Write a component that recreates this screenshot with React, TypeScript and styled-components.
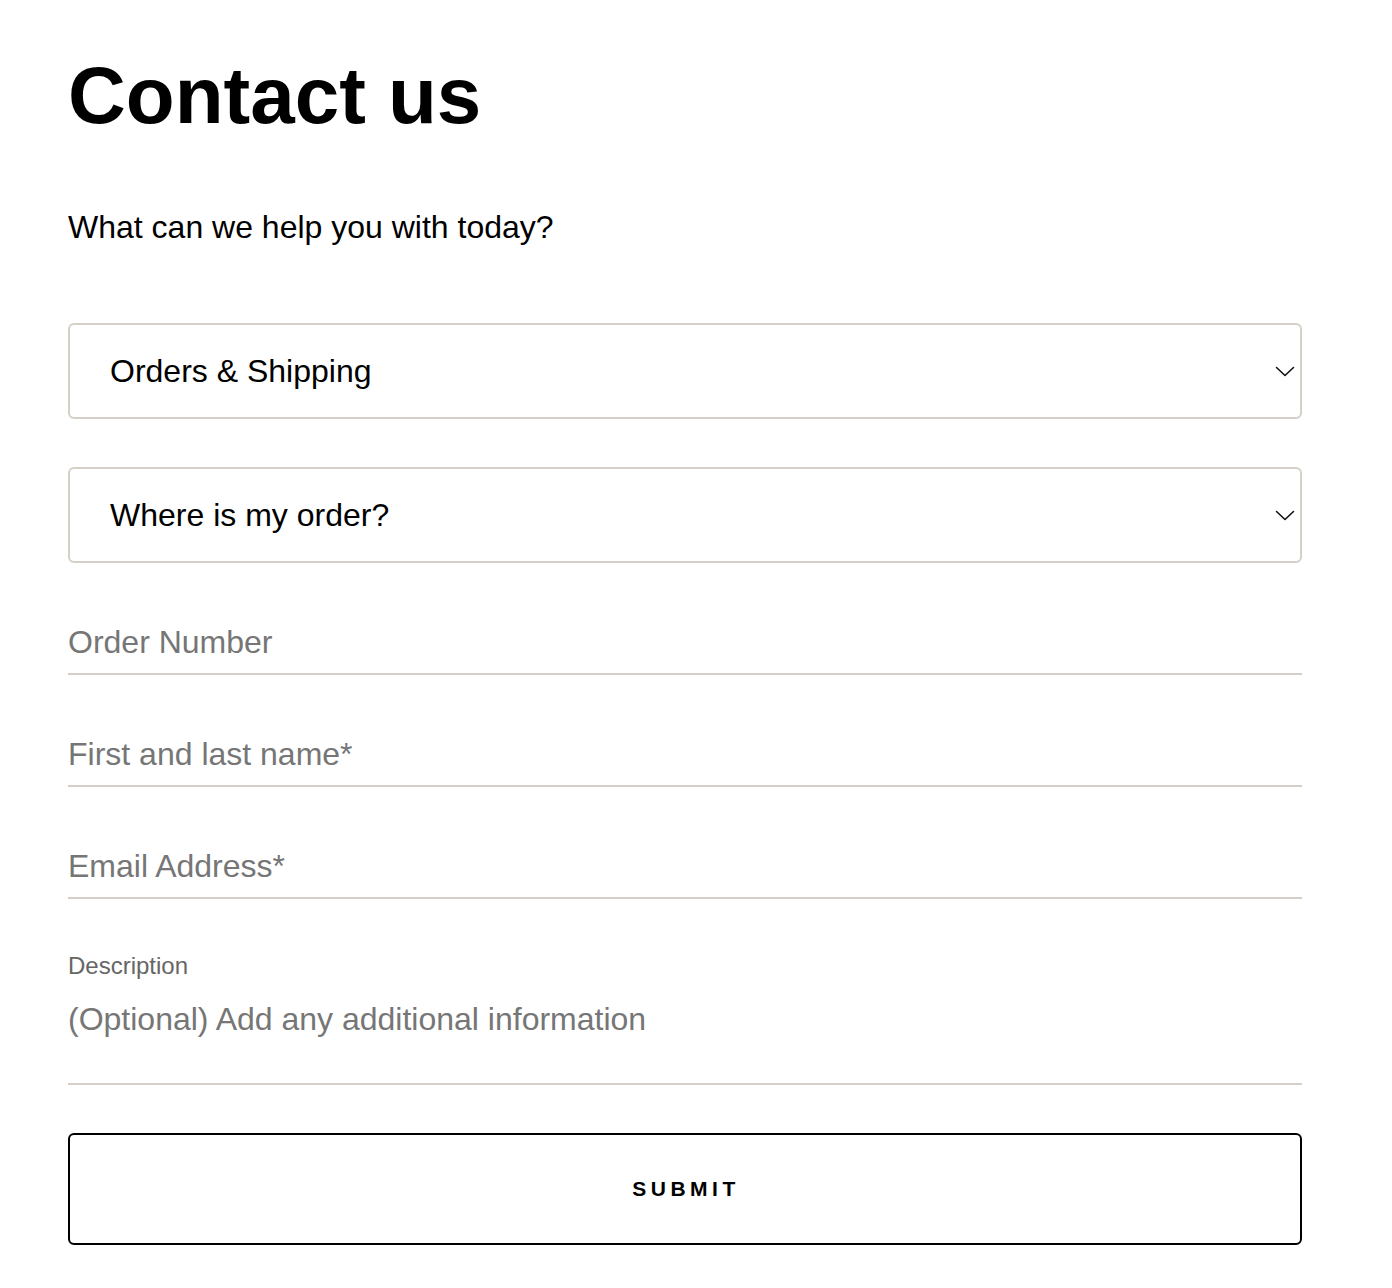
import React from "react";
import styled, { createGlobalStyle } from "styled-components";

const Global = createGlobalStyle`
  html, body { margin: 0; padding: 0; background: #ffffff; }
  body { font-family: "Liberation Sans", Arial, Helvetica, sans-serif; color: #000; }
  * { box-sizing: border-box; }
`;

const Page = styled.main`
  width: 1234px;
  margin-left: 68px;
  padding-top: 50px;
  padding-bottom: 43px;
`;

const Title = styled.h1`
  margin: 0;
  font-size: 80px;
  line-height: 92px;
  font-weight: 700;
`;

const Lead = styled.p`
  margin: 65px 0 0;
  font-size: 32px;
  line-height: 40px;
`;

const Form = styled.form`
  display: flex;
  flex-direction: column;
  margin-top: 76px;
`;

const SelectBox = styled.div<{ $gap?: number }>`
  position: relative;
  height: 96px;
  margin-top: ${(p) => p.$gap ?? 0}px;
  border: 2px solid #d5d0c7;
  border-radius: 6px;
  display: flex;
  align-items: center;
  padding: 0 40px;
  font-size: 32px;
  color: #000;
`;

const Chevron = styled.svg`
  position: absolute;
  right: 5px;
  top: 50%;
  margin-top: -5px;
`;

const TextField = styled.input<{ $gap: number }>`
  display: block;
  width: 100%;
  margin-top: ${(p) => p.$gap}px;
  padding: 0 0 11px;
  border: none;
  border-bottom: 2px solid #d5d0c7;
  font-family: inherit;
  font-size: 32px;
  line-height: 40px;
  height: 53px;
  color: #000;
  outline: none;
  background: transparent;
  &::placeholder { color: #767676; opacity: 1; }
`;

const Label = styled.label`
  display: block;
  margin-top: 53px;
  font-size: 24px;
  line-height: 28px;
  color: #666666;
`;

const TextArea = styled.textarea`
  display: block;
  width: 100%;
  margin-top: 19px;
  height: 86px;
  padding: 0;
  border: none;
  border-bottom: 2px solid #d5d0c7;
  font-family: inherit;
  font-size: 32px;
  line-height: 40px;
  resize: none;
  outline: none;
  background: transparent;
  &::placeholder { color: #767676; opacity: 1; }
`;

const Submit = styled.button`
  margin-top: 48px;
  height: 112px;
  width: 100%;
  border: 2px solid #000;
  border-radius: 6px;
  background: #fff;
  font-family: inherit;
  font-size: 21px;
  font-weight: 700;
  letter-spacing: 4.5px;
  color: #000;
  padding: 0 0 0 2px;
  cursor: pointer;
`;

const ChevronIcon = () => (
  <Chevron width="20" height="11" viewBox="0 0 20 11" fill="none">
    <path d="M1.5 1.5 L10 9.5 L18.5 1.5" stroke="#111" strokeWidth="1.6" strokeLinecap="round" strokeLinejoin="round" />
  </Chevron>
);

export default function App() {
  return (
    <>
      <Global />
      <Page>
        <Title>Contact us</Title>
        <Lead>What can we help you with today?</Lead>
        <Form onSubmit={(e) => e.preventDefault()}>
          <SelectBox>
            Orders &amp; Shipping
            <ChevronIcon />
          </SelectBox>
          <SelectBox $gap={48}>
            Where is my order?
            <ChevronIcon />
          </SelectBox>
          <TextField $gap={59} placeholder="Order Number" />
          <TextField $gap={59} placeholder="First and last name*" />
          <TextField $gap={59} placeholder="Email Address*" />
          <Label>Description</Label>
          <TextArea placeholder="(Optional) Add any additional information" />
          <Submit type="submit">SUBMIT</Submit>
        </Form>
      </Page>
    </>
  );
}
